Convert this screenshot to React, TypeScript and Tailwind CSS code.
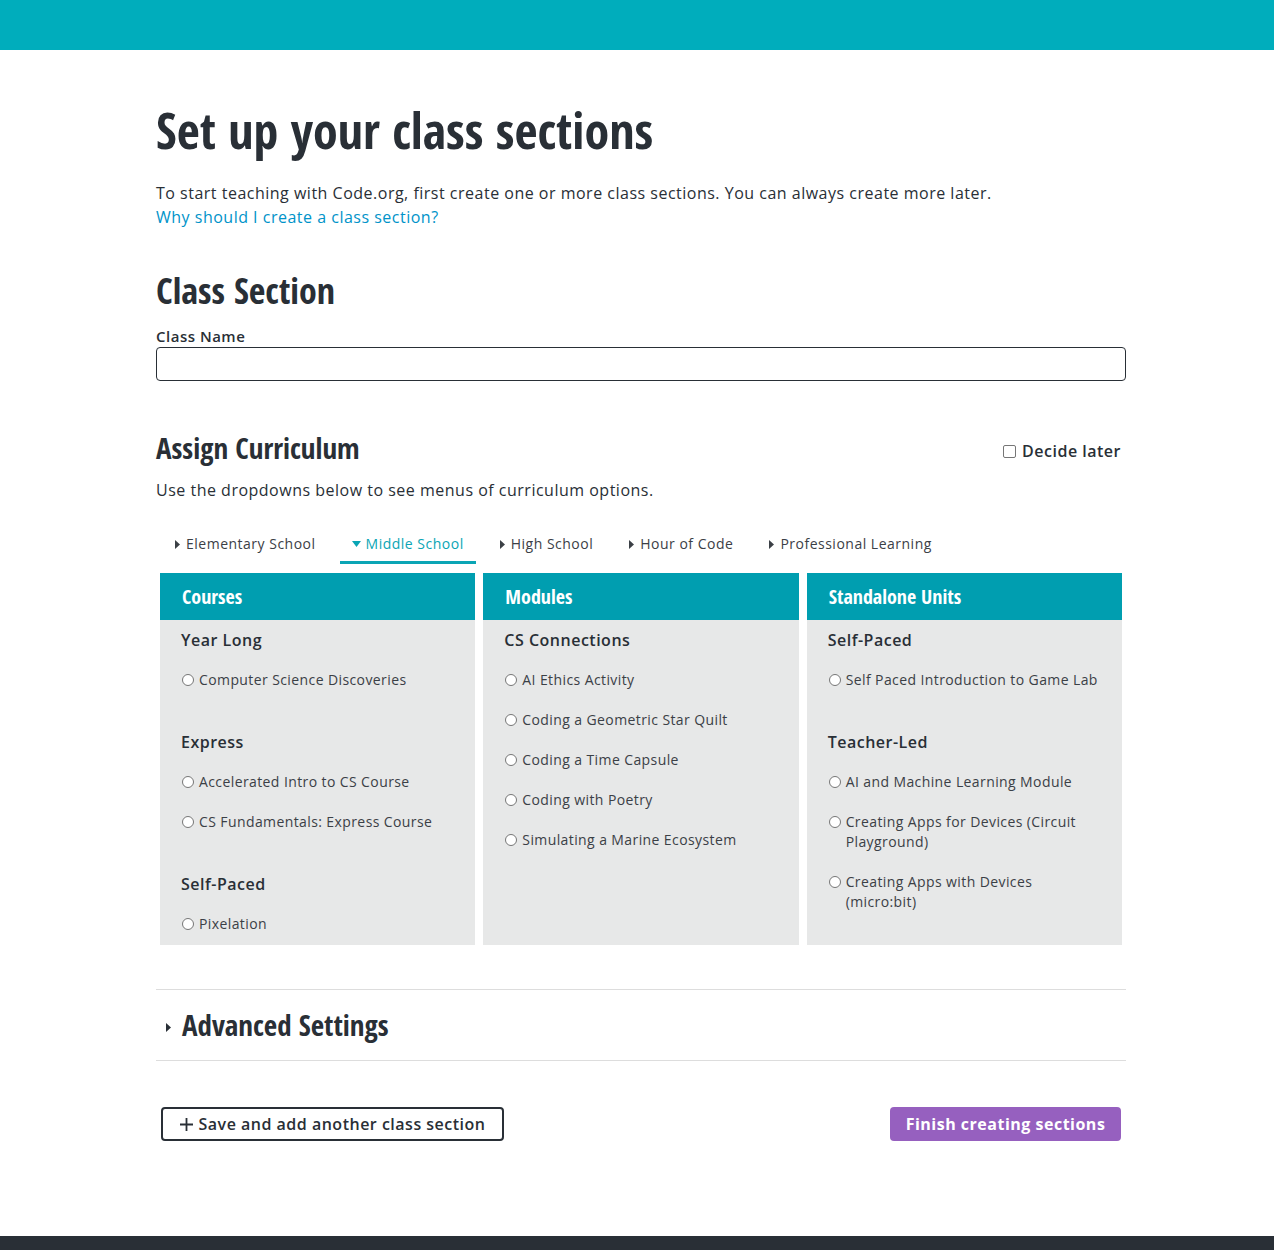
import { useState } from "react";

const HEAD =
  "font-['Open_Sans_Condensed','Noto_Sans_Condensed','Roboto_Condensed','Open_Sans',sans-serif] font-stretch-condensed tracking-normal";

interface Group {
  title: string;
  items: string[];
}

interface Column {
  title: string;
  groups: Group[];
}

const columns: Column[] = [
  {
    title: "Courses",
    groups: [
      { title: "Year Long", items: ["Computer Science Discoveries"] },
      {
        title: "Express",
        items: ["Accelerated Intro to CS Course", "CS Fundamentals: Express Course"],
      },
      { title: "Self-Paced", items: ["Pixelation"] },
    ],
  },
  {
    title: "Modules",
    groups: [
      {
        title: "CS Connections",
        items: [
          "AI Ethics Activity",
          "Coding a Geometric Star Quilt",
          "Coding a Time Capsule",
          "Coding with Poetry",
          "Simulating a Marine Ecosystem",
        ],
      },
    ],
  },
  {
    title: "Standalone Units",
    groups: [
      { title: "Self-Paced", items: ["Self Paced Introduction to Game Lab"] },
      {
        title: "Teacher-Led",
        items: [
          "AI and Machine Learning Module",
          "Creating Apps for Devices (Circuit Playground)",
          "Creating Apps with Devices (micro:bit)",
        ],
      },
    ],
  },
];

const tabs = [
  "Elementary School",
  "Middle School",
  "High School",
  "Hour of Code",
  "Professional Learning",
];

function Caret({ open }: { open?: boolean }) {
  if (open) {
    return (
      <svg width="9" height="6" viewBox="0 0 9 6" className="mr-[5px]">
        <path d="M0 0h9L4.5 6z" fill="currentColor" />
      </svg>
    );
  }
  return (
    <svg width="5" height="9" viewBox="0 0 5 9" className="mr-[6px]">
      <path d="M0 0l5 4.5L0 9z" fill="currentColor" />
    </svg>
  );
}

function Radio() {
  return (
    <span className="mt-[4px] w-[12px] h-[12px] shrink-0 rounded-full border border-[#767676] bg-white" />
  );
}

function CurriculumColumn({ col }: { col: Column }) {
  return (
    <div className="flex flex-col bg-[#e7e8e8]">
      <div className={`h-[47px] flex items-center pl-[22px] bg-[#009eb0] text-white text-[20px] font-bold ${HEAD}`}>
        {col.title}
      </div>
      <div className="pl-[21px] pr-[18px] pt-[10px] pb-[11px]">
        {col.groups.map((g, gi) => (
          <div key={g.title} className={`flex flex-col gap-[20px] ${gi > 0 ? "mt-[42px]" : ""}`}>
            <div className="text-[16px] leading-[20px] font-semibold text-[#292f36]">{g.title}</div>
            {g.items.map((item) => (
              <label key={item} className="flex items-start gap-[5px] pl-[1px] text-[14px] leading-[20px] tracking-[0.4px] text-[#3b4046]">
                <Radio />
                <span>{item}</span>
              </label>
            ))}
          </div>
        ))}
      </div>
    </div>
  );
}

export default function App() {
  const [active] = useState("Middle School");

  return (
    <div className="min-h-[1250px] flex flex-col bg-white font-['Open_Sans',sans-serif] tracking-[0.5px] text-[#292f36]">
      <div className="h-[50px] bg-[#00adbc]" />

      <div className="ml-[156px] w-[970px] flex-1">
        <h1 className={`mt-[51px] text-[50px] leading-[58px] font-bold ${HEAD}`}>
          Set up your class sections
        </h1>
        <p className="mt-[22px] text-[16px] leading-[24px]">
          To start teaching with Code.org, first create one or more class sections. You can always create more later.
        </p>
        <a className="block text-[16px] leading-[24px] text-[#0093c9]">Why should I create a class section?</a>

        <h2 className={`mt-[40px] text-[36px] leading-[44px] font-bold ${HEAD}`}>Class Section</h2>
        <div className="mt-[13px] text-[15px] leading-[20px] font-semibold">Class Name</div>
        <input className="mt-[1px] block w-full h-[34px] rounded-[4px] border border-[#292f36] px-2" />

        <div className="mt-[49px] flex items-center justify-between">
          <h3 className={`text-[29px] leading-[36px] font-bold ${HEAD}`}>Assign Curriculum</h3>
          <label className="mr-[5px] mt-[6px] flex items-center gap-[6px] text-[16px] font-semibold">
            <span className="w-[13px] h-[13px] rounded-[2px] border border-[#767676] bg-white" />
            Decide later
          </label>
        </div>
        <p className="mt-[12px] text-[16px] leading-[24px]">
          Use the dropdowns below to see menus of curriculum options.
        </p>

        <div className="mt-[26px] ml-[7px] flex gap-[12px]">
          {tabs.map((t) => {
            const on = t === active;
            return (
              <div
                key={t}
                className={`flex items-center px-[12px] pt-[6px] pb-[7px] border-b-[3px] text-[14px] leading-[20px] ${
                  on ? "border-[#0aa5b5] text-[#0aa5b5]" : "border-transparent text-[#3b4046]"
                }`}
              >
                <Caret open={on} />
                {t}
              </div>
            );
          })}
        </div>

        <div className="mt-[9px] mx-[4px] grid grid-cols-3 gap-[8px]">
          {columns.map((c) => (
            <CurriculumColumn key={c.title} col={c} />
          ))}
        </div>

        <div className="mt-[44px] border-t border-b border-[#dddddd] h-[72px] flex items-center">
          <svg width="5" height="9" viewBox="0 0 5 9" className="ml-[10px] mt-[4px] text-[#292f36]">
            <path d="M0 0l5 4.5L0 9z" fill="currentColor" />
          </svg>
          <span className={`ml-[11px] text-[29px] leading-[36px] font-bold ${HEAD}`}>Advanced Settings</span>
        </div>

        <div className="mt-[46px] mx-[5px] flex justify-between">
          <button className="h-[34px] w-[343px] rounded-[4px] border-2 border-[#292f36] bg-white text-[16px] font-semibold flex items-center justify-center gap-[6px]">
            <svg width="13" height="13" viewBox="0 0 13 13">
              <path d="M6.5 0v13M0 6.5h13" stroke="currentColor" strokeWidth="1.8" />
            </svg>
            Save and add another class section
          </button>
          <button className="h-[34px] w-[231px] rounded-[4px] bg-[#9660bf] text-white text-[16px] font-bold">
            Finish creating sections
          </button>
        </div>
      </div>

      <div className="h-[14px] bg-[#292f36]" />
    </div>
  );
}
